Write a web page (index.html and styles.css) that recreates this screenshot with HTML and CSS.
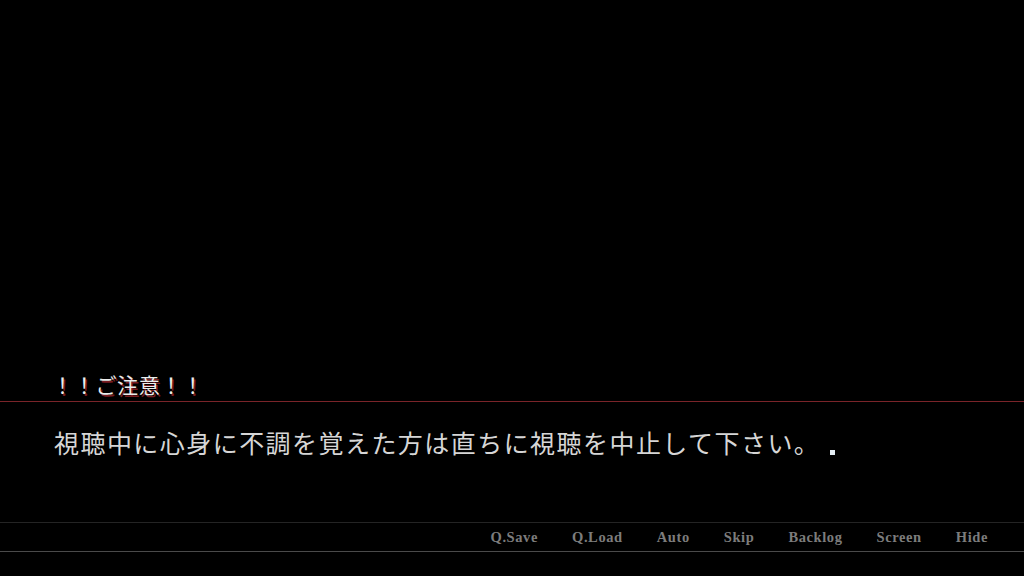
FILE: index.html
```html
<!DOCTYPE html>
<html lang="ja">
<head>
<meta charset="utf-8">
<title>ADV</title>
<link rel="stylesheet" href="styles.css">
</head>
<body>
<div class="screen">
  <div class="stage"></div>
  <div class="name">！！ご注意！！</div>
  <div class="message">視聴中に心身に不調を覚えた方は直ちに視聴を中止して下さい。<span class="cursor"></span></div>
  <nav class="menu">
    <span class="item">Q.Save</span>
    <span class="item">Q.Load</span>
    <span class="item">Auto</span>
    <span class="item">Skip</span>
    <span class="item">Backlog</span>
    <span class="item">Screen</span>
    <span class="item">Hide</span>
  </nav>
  <div class="foot"></div>
</div>
</body>
</html>
```
FILE: styles.css
```css
html, body {
  margin: 0;
  padding: 0;
  background: #000;
}
.screen {
  width: 1024px;
  height: 576px;
  display: flex;
  flex-direction: column;
  background: #000;
  overflow: hidden;
}
.stage {
  flex: 1;
}
.name {
  padding: 0 0 3px 52px;
  font-family: "Noto Sans CJK JP", sans-serif;
  font-size: 21px;
  line-height: 27px;
  letter-spacing: 0.7px;
  color: #ececec;
  text-shadow: 1.5px 1.5px 0 #7a1c20;
  border-bottom: 1px solid #7a2429;
}
.message {
  height: 120px;
  box-sizing: border-box;
  padding: 22px 0 0 54px;
  font-family: "Noto Sans CJK JP", sans-serif;
  font-size: 25px;
  line-height: 36px;
  letter-spacing: 1.45px;
  color: #d6d6d6;
}
.cursor {
  display: inline-block;
  width: 5px;
  height: 5px;
  margin-left: 10px;
  background: #e4eef4;
  vertical-align: -2px;
}
.menu {
  height: 28px;
  border-top: 1px solid #242424;
  border-bottom: 1px solid #4a4a4a;
  display: flex;
  justify-content: flex-end;
  align-items: center;
  gap: 34px;
  padding-right: 36px;
}
.item {
  font-family: "Liberation Serif", serif;
  font-weight: bold;
  font-size: 14.5px;
  letter-spacing: 0.6px;
  color: #7c7c7c;
}
.foot {
  height: 24px;
}
```
